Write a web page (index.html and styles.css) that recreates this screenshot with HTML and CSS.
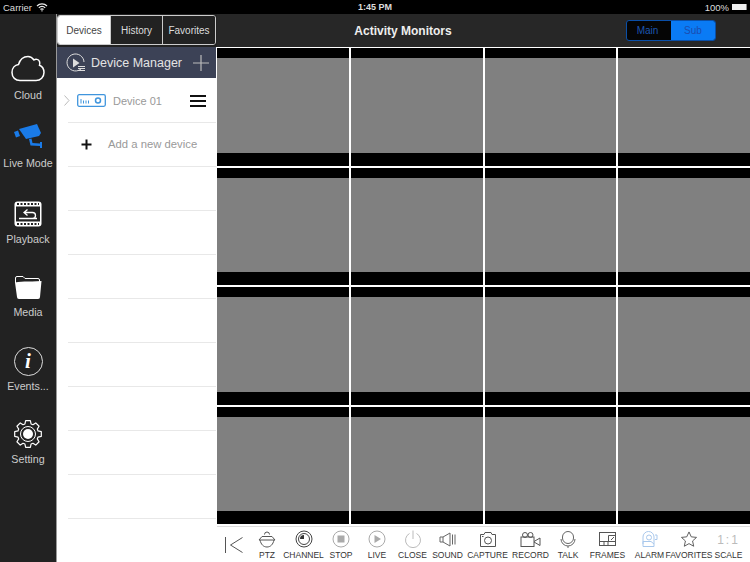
FILE: index.html
```html
<!DOCTYPE html>
<html>

<head>
  <title>Activity Monitors</title>
  <link rel="stylesheet" href="styles.css">
</head>

<body>
  <div class="app">
    <div class="status-bar">
      <div class="status-left">
        Carrier
        <svg width="12" height="9" viewBox="0 0 12 9" fill="none" stroke="#eee" stroke-width="1.2">
          <path d="M1 3a7 7 0 0 1 10 0M2.8 4.8a4.4 4.4 0 0 1 6.4 0M4.5 6.5a2 2 0 0 1 3 0" />
          <path d="M6 8.8L4.9 7.4h2.2z" fill="#eee" stroke="none" />
        </svg>
      </div>
      <div class="status-time">1:45 PM</div>
      <div class="status-right">
        100%
        <span class="battery"></span>
      </div>
    </div>

    <div class="content">
      <div class="sidebar">
        <div class="side-item">
          <div class="side-icon">
            <svg width="34" height="27" viewBox="0 0 34 27" fill="none" stroke="#fff" stroke-width="1.5">
              <path d="M9 25.5C4.500 25.500 1 22.500 1 17.500C1 13 3.800 10 7.500 9.500C9 4.500 12.500 1.500 17 1.500C19.500 1.500 21.500 2.800 23 5C24.500 3.800 27.500 4 28.500 6.500C29 8 29 9 28.500 10.200C31.500 11.500 33 14.500 33 17.500C33 22 29.500 25.500 25 25.500Z" />
            </svg>
          </div>
          <div class="side-label">Cloud</div>
        </div>
        <div class="side-item">
          <div class="side-icon">
            <svg width="30" height="25" viewBox="0 0 30 25" fill="#1a7be8">
              <path d="M6 5L24 0L28 9L26 12L13 15Z" />
              <path d="M1 8L5 6.500L7 12L3 13.500Z" />
              <path d="M16 15L18.500 14.500L19.500 19L27 19.500V18H29V24H27V22L17.500 21.500Z" />
            </svg>
          </div>
          <div class="side-label">Live Mode</div>
        </div>
        <div class="side-item low">
          <div class="side-icon">
            <svg width="28" height="26" viewBox="0 0 28 26">
              <rect x="0.500" y="0.500" width="27" height="25" rx="3" fill="#fff" />
              <rect x="2" y="5.500" width="24" height="15" fill="#222" />
              <path d="M3 3h22M3 23h22" stroke="#222" stroke-width="2" stroke-dasharray="2 1.500" />
              <path d="M5 17.500H23M13.500 8.500L10 11.500L13.500 14.500M10 11.500H18.500A3 3 0 0 1 18.500 17.500" stroke="#fff" stroke-width="1.300" fill="none" />
            </svg>
          </div>
          <div class="side-label">Playback</div>
        </div>
        <div class="side-item low">
          <div class="side-icon">
            <svg width="28" height="24" viewBox="0 0 28 24">
              <path d="M1.500 8V3A1.500 1.500 0 0 1 3 1.500H9L11 3.500H24A1.500 1.500 0 0 1 25.500 5V7" fill="none" stroke="#fff" stroke-width="1" />
              <path d="M1 7.500C9 5.500 18 7 27.500 6L26 22A2 2 0 0 1 24 24H5A2 2 0 0 1 3 22Z" fill="#fff" />
            </svg>
          </div>
          <div class="side-label">Media</div>
        </div>
        <div class="side-item low">
          <div class="side-icon">
            <div class="info-circle">i</div>
          </div>
          <div class="side-label">Events...</div>
        </div>
        <div class="side-item low">
          <div class="side-icon">
            <svg width="28" height="28" viewBox="0 0 28 28" fill="none" stroke="#fff">
              <path stroke-width="1.200" stroke-linejoin="round" d="M10.930 3.960L11.650 .7H16.350L17.070 3.960L18.930 4.730L21.740 2.940L25.060 6.260L23.270 9.070L24.040 10.930L27.300 11.650V16.350L24.040 17.070L23.270 18.930L25.060 21.740L21.740 25.060L18.930 23.270L17.070 24.040L16.350 27.300H11.650L10.930 24.040L9.070 23.270L6.260 25.060L2.940 21.740L4.730 18.930L3.960 17.070L.7 16.350V11.650L3.960 10.930L4.730 9.070L2.940 6.260L6.260 2.940L9.070 4.730Z" />
              <circle cx="14" cy="14" r="7.500" stroke-width="1" />
              <circle cx="14" cy="14" r="5" fill="#fff" stroke="none" />
            </svg>
          </div>
          <div class="side-label">Setting</div>
        </div>
      </div>

      <div class="panel">
        <div class="tabs-wrap">
          <div class="tabs">
            <div class="tab active">Devices</div>
            <div class="tab">History</div>
            <div class="tab">Favorites</div>
          </div>
        </div>
        <div class="panel-head">
          <svg width="20" height="20" viewBox="0 0 20 20" fill="none" stroke="#ddd" stroke-width="1">
            <path d="M15.500 15.500A8.500 8.500 0 1 1 18 9" />
            <path d="M7 5.500L13.500 10L7 14.500Z" fill="#ddd" stroke="none" />
            <path d="M12 13.500H19M12 15.500H19M12 17.500H19" />
          </svg>
          <span class="panel-title">Device Manager</span>
          <svg width="16" height="16" viewBox="0 0 16 16" stroke="#bbb" stroke-width="1.200">
            <path d="M8 0V16M0 8H16" />
          </svg>
        </div>
        <div class="device-row">
          <svg class="chevron" width="6" height="11" viewBox="0 0 6 11" fill="none" stroke="#bbb" stroke-width="1">
            <path d="M.5 .5L5 5.500L.5 10.500" />
          </svg>
          <svg width="29" height="13" viewBox="0 0 29 13" fill="none" stroke="#3f95dd">
            <rect x="0.700" y="0.700" width="27.600" height="11.600" rx="1.500" stroke-width="1.300" />
            <path d="M4 5V9.500M6.500 6.500V9.500M9 6.500V9.500M11.500 6.500V9.500" stroke-width="1" />
            <circle cx="21" cy="6.500" r="2.500" stroke-width="1.500" />
          </svg>
          <span class="device-name">Device 01</span>
          <div class="burger"><i></i><i></i><i></i></div>
        </div>
        <div class="add-row">
          <svg width="11" height="11" viewBox="0 0 11 11" stroke="#111" stroke-width="2">
            <path d="M5.500 0.500V10.500M0.500 5.500H10.500" />
          </svg>
          <span class="add-text">Add a new device</span>
        </div>
        <div class="empty-row"></div>
        <div class="empty-row"></div>
        <div class="empty-row"></div>
        <div class="empty-row"></div>
        <div class="empty-row"></div>
        <div class="empty-row"></div>
        <div class="empty-row"></div>
        <div class="empty-row"></div>
      </div>

      <div class="main">
        <div class="topbar">
          <div class="topbar-title">Activity Monitors</div>
          <div class="segment">
            <div class="seg">Main</div>
            <div class="seg on">Sub</div>
          </div>
        </div>
        <div class="grid">
          <div class="cell"></div>
          <div class="cell"></div>
          <div class="cell"></div>
          <div class="cell"></div>
          <div class="cell"></div>
          <div class="cell"></div>
          <div class="cell"></div>
          <div class="cell"></div>
          <div class="cell"></div>
          <div class="cell"></div>
          <div class="cell"></div>
          <div class="cell"></div>
          <div class="cell"></div>
          <div class="cell"></div>
          <div class="cell"></div>
          <div class="cell"></div>
        </div>
        <div class="toolbar">
          <div class="tool tool-back">
            <div class="tool-icon">
              <svg width="18" height="16" viewBox="0 0 18 16" fill="none" stroke="#555" stroke-width="1">
                <path d="M0.500 0V16M17.500 0.500L5.500 8L17.500 15.500" />
              </svg>
            </div>
          </div>
          <div class="tool">
            <div class="tool-icon">
              <svg width="18" height="18" viewBox="0 0 18 18" fill="none" stroke="#555" stroke-width="1">
                <path d="M6.500 4.500A2.500 2.500 0 0 1 11.500 4.500" />
                <path d="M4 6.500H14L17 10H1Z" />
                <path d="M2 10C3 14.500 5.500 17 9 17S15 14.500 16 10" />
              </svg>
            </div>
            <span>PTZ</span>
          </div>
          <div class="tool">
            <div class="tool-icon">
              <svg width="18" height="18" viewBox="0 0 18 18" fill="none" stroke="#444">
                <circle cx="9" cy="9" r="8" stroke-width="1" />
                <circle cx="9" cy="9" r="5.500" stroke-width="1" />
                <path d="M9 9V5A4 4 0 0 0 5 9Z" fill="#333" stroke="none" />
              </svg>
            </div>
            <span>CHANNEL</span>
          </div>
          <div class="tool">
            <div class="tool-icon">
              <svg width="18" height="18" viewBox="0 0 18 18" fill="none" stroke="#aaa" stroke-width="1">
                <circle cx="9" cy="9" r="8" />
                <rect x="6" y="6" width="6" height="6" fill="#aaa" />
              </svg>
            </div>
            <span>STOP</span>
          </div>
          <div class="tool">
            <div class="tool-icon">
              <svg width="18" height="18" viewBox="0 0 18 18" fill="none" stroke="#aaa" stroke-width="1">
                <circle cx="9" cy="9" r="8" />
                <path d="M6.500 5L13 9L6.500 13Z" fill="#aaa" stroke="none" />
              </svg>
            </div>
            <span>LIVE</span>
          </div>
          <div class="tool">
            <div class="tool-icon">
              <svg width="18" height="18" viewBox="0 0 18 18" fill="none" stroke="#bbb" stroke-width="1">
                <path d="M5.500 3.500A7.500 7.500 0 1 0 12.500 3.500M9 0.500V9" />
              </svg>
            </div>
            <span>CLOSE</span>
          </div>
          <div class="tool">
            <div class="tool-icon">
              <svg width="18" height="15" viewBox="0 0 18 15" fill="none" stroke="#666" stroke-width="1">
                <path d="M1 5H4V10H1ZM4 5L11 1V14L4 10M13.500 2.500V12.500M16 2.500V12.500" />
              </svg>
            </div>
            <span>SOUND</span>
          </div>
          <div class="tool">
            <div class="tool-icon">
              <svg width="18" height="15" viewBox="0 0 18 15" fill="none" stroke="#555" stroke-width="1">
                <path d="M1.500 2.500H5L6 0.500H12L13 2.500H16.500V14.500H1.500Z" />
                <circle cx="9" cy="8.500" r="3.500" />
                <path d="M3 4.500H4.500" />
              </svg>
            </div>
            <span>CAPTURE</span>
          </div>
          <div class="tool">
            <div class="tool-icon">
              <svg width="21" height="15" viewBox="0 0 21 15" fill="none" stroke="#555" stroke-width="1">
                <rect x="1" y="5" width="13" height="9.500" />
                <circle cx="5" cy="3" r="2.500" />
                <circle cx="10.500" cy="3" r="2.500" />
                <path d="M14 9.500L20 6V13.500L14 10" />
              </svg>
            </div>
            <span>RECORD</span>
          </div>
          <div class="tool">
            <div class="tool-icon">
              <svg width="16" height="17" viewBox="0 0 16 17" fill="none" stroke="#666" stroke-width="1">
                <rect x="2.500" y="0.500" width="11" height="12" rx="5.500" />
                <path d="M1 8A7 7 0 0 0 15 8M8 15V17" />
              </svg>
            </div>
            <span>TALK</span>
          </div>
          <div class="tool">
            <div class="tool-icon">
              <svg width="17" height="14" viewBox="0 0 17 14" fill="none" stroke="#555" stroke-width="1">
                <rect x="0.500" y="0.500" width="16" height="13" />
                <path d="M0.500 9.500H17M5 9.500V13.500M9 9.500V13.500M9.500 9.500V3.500H17" />
                <path d="M12 8L15 5" />
              </svg>
            </div>
            <span>FRAMES</span>
          </div>
          <div class="tool">
            <div class="tool-icon">
              <svg width="16" height="16" viewBox="0 0 16 16" fill="none" stroke="#a9c8ec" stroke-width="1">
                <path d="M1 13V6A5.500 5.500 0 0 1 12 6V13" />
                <circle cx="7" cy="6.500" r="2.500" />
                <path d="M1 10.500H9L12 13V15.500H1Z" />
                <path d="M13 4H15V8.500H13" />
              </svg>
            </div>
            <span>ALARM</span>
          </div>
          <div class="tool">
            <div class="tool-icon">
              <svg width="18" height="16" viewBox="0 0 18 17" fill="none" stroke="#555" stroke-width="1">
                <path d="M9 1L11.400 6.200L17 6.800L12.800 10.600L14 16.200L9 13.400L4 16.200L5.200 10.600L1 6.800L6.600 6.200Z" stroke-linejoin="round" />
              </svg>
            </div>
            <span>FAVORITES</span>
          </div>
          <div class="tool">
            <div class="tool-icon scale-icon">1:1</div>
            <span>SCALE</span>
          </div>
        </div>
      </div>
    </div>
  </div>
</body>

</html>
```

FILE: styles.css
```css
html,
body {
  margin: 0;
  padding: 0;
}

body {
  font-family: 'Liberation Sans', sans-serif;
  background: #000;
  overflow: hidden;
}

.app {
  width: 750px;
  height: 562px;
  display: flex;
  flex-direction: column;
}

.status-bar {
  height: 14px;
  background: #000;
  color: #ddd;
  font-size: 9.5px;
  display: grid;
  grid-template-columns: 1fr auto 1fr;
  align-items: center;
  padding: 0 3px;
}

.status-left {
  display: flex;
  align-items: center;
  gap: 4px;
}

.status-time {
  font-weight: bold;
  font-size: 9px;
}

.status-right {
  display: flex;
  justify-content: flex-end;
  align-items: center;
  gap: 3px;
}

.battery {
  width: 14px;
  height: 6px;
  background: #eee;
  border-right: 1px solid #888;
}

.content {
  flex: 1;
  display: flex;
  min-height: 0;
}

.sidebar {
  width: 57px;
  box-sizing: border-box;
  background: #222;
  border-right: 1px solid #999;
  display: grid;
  grid-template-rows: 68px 76px 73px 74px 73px 73px;
  padding-top: 34px;
  align-content: start;
}

.side-item {
  display: flex;
  flex-direction: column;
  align-items: center;
}

.side-icon {
  height: 40px;
  display: flex;
  align-items: center;
  justify-content: center;
}

.low .side-icon {
  height: 36px;
  padding-top: 4px;
}

.side-label {
  height: 14px;
  line-height: 14px;
  font-size: 10.700px;
  color: #ccc;
  white-space: nowrap;
}

.info-circle {
  width: 27px;
  height: 27px;
  border: 1.500px solid #ddd;
  border-radius: 50%;
  color: #fff;
  font: italic bold 21px/27px 'Liberation Serif', serif;
  text-align: center;
}

.panel {
  width: 160px;
  background: #fff;
}

.tabs-wrap {
  background: #222;
  height: 33px;
  box-sizing: border-box;
  padding: 1px 1px 2px 0;
}

.tabs {
  display: grid;
  grid-template-columns: 52px 52px 1fr;
  height: 30px;
  box-sizing: border-box;
  border: 1px solid #ccc;
  border-radius: 3px;
  overflow: hidden;
}

.tab {
  color: #ddd;
  background: #222;
  font-size: 10px;
  line-height: 29px;
  text-align: center;
  border-left: 1px solid #ccc;
}

.tab.active {
  background: #fff;
  color: #444;
  border-left: 0;
}

.panel-head {
  height: 31px;
  margin-right: 1px;
  background: #3c4256;
  display: flex;
  align-items: center;
  padding: 0 7px 0 9px;
  gap: 5px;
}

.panel-title {
  flex: 1;
  color: #e4e4e4;
  font-size: 12.500px;
}

.device-row {
  height: 45px;
  box-sizing: border-box;
  position: relative;
  display: flex;
  align-items: center;
  padding-left: 7px;
}

.device-row::after,
.add-row::after,
.empty-row::after {
  content: '';
  position: absolute;
  left: 11px;
  right: 1px;
  bottom: 0;
  height: 1px;
  background: #e8e8e8;
}

.chevron {
  margin-right: 7px;
}

.device-name {
  flex: 1;
  margin-left: 7px;
  font-size: 11px;
  color: #999;
}

.burger {
  width: 16px;
  margin-right: 11px;
  display: flex;
  flex-direction: column;
  gap: 3px;
}

.burger i {
  height: 2px;
  background: #111;
}

.add-row {
  height: 44px;
  box-sizing: border-box;
  position: relative;
  display: flex;
  align-items: center;
  padding: 0 0 2px 24px;
  gap: 16px;
}

.add-text {
  font-size: 11.300px;
  color: #999;
}

.empty-row {
  height: 44px;
  position: relative;
}

.main {
  flex: 1;
  background: #fff;
  display: flex;
  flex-direction: column;
  min-width: 0;
}

.topbar {
  height: 33px;
  background: #272727;
  display: flex;
  align-items: center;
}

.topbar-title {
  width: 372px;
  text-align: center;
  color: #eee;
  font-size: 12px;
  font-weight: bold;
}

.segment {
  display: grid;
  grid-template-columns: 44px 44px;
  height: 21px;
  margin-left: 37px;
  box-sizing: border-box;
  border: 1px solid #0a4fa8;
  border-radius: 3px;
  overflow: hidden;
  font-size: 10px;
  line-height: 19px;
  text-align: center;
  color: #1c55b0;
  background: #050505;
}

.seg {
  padding-right: 3px;
}

.seg.on {
  background: #0a7bf5;
  color: #1c4cb0;
  padding-right: 0;
}

.grid {
  margin-top: 1px;
  height: 476px;
  display: grid;
  grid-template-columns: repeat(4, 1fr);
  grid-template-rows: repeat(4, 1fr);
  gap: 2px;
}

.cell {
  background: #808080;
  border-top: 10px solid #000;
  border-bottom: 13px solid #000;
}

.toolbar {
  margin-top: 2px;
  height: 36px;
  box-sizing: border-box;
  border-top: 1px solid #ddd;
  display: grid;
  grid-template-columns: 33px 34px 39px 36px 36px 35px 35px 45px 41px 34px 45px 39px 40px 39px;
  background: #fff;
}

.tool {
  display: flex;
  flex-direction: column;
  align-items: center;
  padding-top: 1px;
  min-width: 0;
  color: #333;
  font-size: 8.500px;
  line-height: 10px;
  white-space: nowrap;
}

.tool-icon {
  height: 22px;
  display: flex;
  align-items: center;
  justify-content: center;
}

.tool-back .tool-icon {
  height: 34px;
}

.scale-icon {
  font-size: 12px;
  letter-spacing: 2px;
  color: #bbb;
  padding-top: 1px;
  box-sizing: border-box;
}
```
